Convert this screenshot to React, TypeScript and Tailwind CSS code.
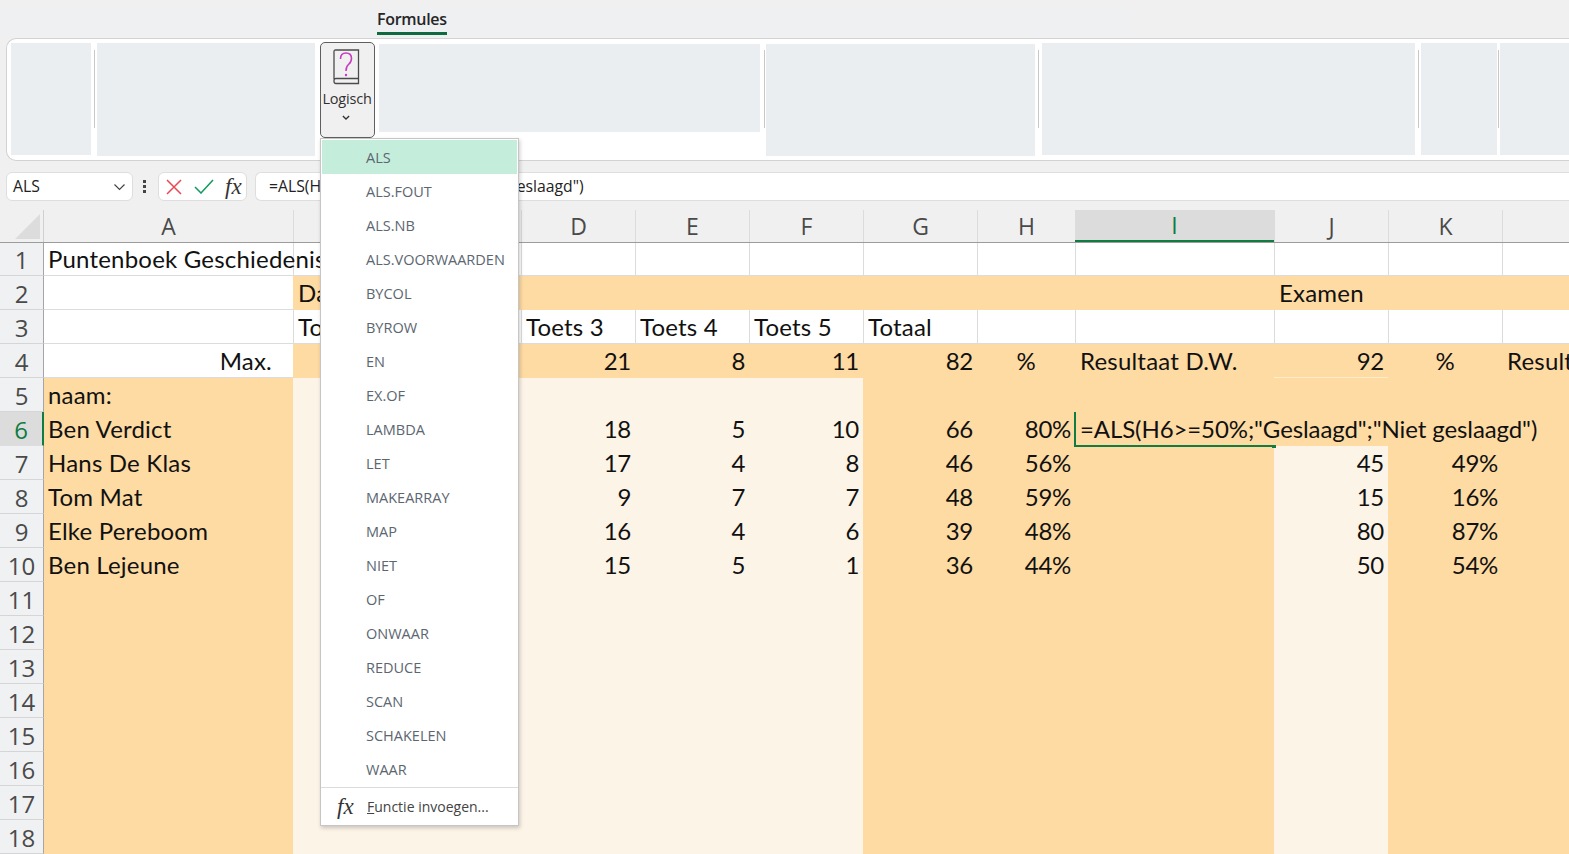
import React from 'react';

const MENU_ITEMS = [
  'ALS', 'ALS.FOUT', 'ALS.NB', 'ALS.VOORWAARDEN', 'BYCOL', 'BYROW', 'EN', 'EX.OF', 'LAMBDA', 'LET',
  'MAKEARRAY', 'MAP', 'NIET', 'OF', 'ONWAAR', 'REDUCE', 'SCAN', 'SCHAKELEN', 'WAAR',
];

const COLUMNS = [
  { label: 'A', width: 'w-[249px]' },
  { label: '', width: 'w-[114px]' },
  { label: '', width: 'w-[114px]' },
  { label: 'D', width: 'w-[114px]' },
  { label: 'E', width: 'w-[114px]' },
  { label: 'F', width: 'w-[114px]' },
  { label: 'G', width: 'w-[114px]' },
  { label: 'H', width: 'w-[98px]' },
  { label: 'I', width: 'w-[199px]' },
  { label: 'J', width: 'w-[114px]' },
  { label: 'K', width: 'w-[114px]' },
  { label: '', width: 'w-[67px]' },
];

type Row = Record<number, string>;

// index = column (0 is A)
const ROWS: Row[] = [
  { 0: 'Puntenboek Geschiedenis' },
  { 1: 'Dagelijks werk', 9: 'Examen' },
  { 1: 'Toets 1', 3: 'Toets 3', 4: 'Toets 4', 5: 'Toets 5', 6: 'Totaal' },
  { 0: 'Max.', 3: '21', 4: '8', 5: '11', 6: '82', 7: '%', 8: 'Resultaat D.W.', 9: '92', 10: '%', 11: 'Resultaat' },
  { 0: 'naam:' },
  { 0: 'Ben Verdict', 3: '18', 4: '5', 5: '10', 6: '66', 7: '80%', 8: '=ALS(H6>=50%;"Geslaagd";"Niet geslaagd")' },
  { 0: 'Hans De Klas', 3: '17', 4: '4', 5: '8', 6: '46', 7: '56%', 9: '45', 10: '49%' },
  { 0: 'Tom Mat', 3: '9', 4: '7', 5: '7', 6: '48', 7: '59%', 9: '15', 10: '16%' },
  { 0: 'Elke Pereboom', 3: '16', 4: '4', 5: '6', 6: '39', 7: '48%', 9: '80', 10: '87%' },
  { 0: 'Ben Lejeune', 3: '15', 4: '5', 5: '1', 6: '36', 7: '44%', 9: '50', 10: '54%' },
  {}, {}, {}, {}, {}, {}, {}, {},
];

const WHITE_A = 'bg-white border-b border-[#dcdcdc]';
const WHITE = 'bg-white border-l border-b border-[#dcdcdc]';
const ORANGE = 'bg-[#fedba3]';
const CREAM = 'bg-[#fdf4e8]';

function cellBg(row: number, col: number) {
  if (row === 1 || row === 3) return col === 0 ? WHITE_A : WHITE;
  if (row === 2 || row === 4) return col === 0 ? WHITE_A : ORANGE;
  if (col === 0) return ORANGE;
  if (col >= 1 && col <= 5) return CREAM;
  if (col === 9 && row >= 7) return CREAM;
  return ORANGE;
}

function cellAlign(row: number, col: number, text: string) {
  if (text === '%') return 'justify-center';
  if (row === 4 && col === 0) return 'justify-end pr-[21px] tracking-[0.2px]';
  if (/^\d+%?$/.test(text)) return 'justify-end pr-[4px] tracking-[-0.3px]';
  if (text.startsWith('=')) return 'justify-start pl-[5px] tracking-[-0.1px]';
  if (col === 0 || row === 3) return 'justify-start pl-[4px] tracking-[0.2px]';
  return 'justify-start pl-[5px] tracking-[0.2px]';
}

const FxLabel = ({ className }: { className: string }) => (
  <span className={`font-['Liberation_Serif',serif] italic ${className}`}>fx</span>
);

const Chevron = ({ className, weight = 1.2 }: { className: string; weight?: number }) => (
  <svg viewBox="0 0 12 8" className={className} fill="none" stroke="currentColor" strokeWidth={weight}>
    <path d="M1 1.5 L6 6.5 L11 1.5" />
  </svg>
);

const RibbonGroup = ({ className }: { className: string }) => <div className={`bg-[#ebeef0] shrink-0 ${className}`} />;
const RibbonSep = ({ className = '' }: { className?: string }) => (
  <div className={`w-px h-[78px] mt-[7px] shrink-0 bg-[#c8c8c8] ${className}`} />
);

const LogischButton = () => (
  <div className="w-[55px] h-[96px] -mt-px ml-[5px] mr-[4px] shrink-0 rounded-[5px] border border-[#5f5f5f] bg-[#f0f0f0] flex flex-col items-center pt-[6px]">
    <svg viewBox="0 0 28 36" className="w-[28px] h-[36px] -ml-[3px]" fill="none">
      <path d="M2 30 V2.5 Q2 1 3.5 1 H26.5 V34.5 H4 Q2 34.5 2 32.5 V31.5 Q2 29.5 4 29.5 H26.5" stroke="#4b4b4b" strokeWidth="1.3" />
      <path d="M8.5 10 Q8.5 4 14 4 Q19.5 4 19.5 9.5 Q19.5 13 16.5 15.5 Q14 17.5 14 22" stroke="#c83cc0" strokeWidth="1.6" />
      <circle cx="14" cy="26" r="1.2" fill="#c83cc0" />
    </svg>
    <span className="mt-[4px] -ml-[1px] text-[14.5px] leading-[20px] text-[#303030] tracking-[-0.2px]">Logisch</span>
    <Chevron className="w-[8px] h-[5px] mt-[6px] -ml-[3px] text-[#303030]" weight={2} />
  </div>
);

const LogicalMenu = () => (
  <div className="absolute left-[320px] top-[138px] w-[199px] h-[688px] z-20 bg-white border border-[#c6c6c6] shadow-[1px_2px_4px_rgba(0,0,0,0.2)]">
    <div className="pt-px px-px">
      {MENU_ITEMS.map((name, idx) => (
        <div
          key={name}
          className={`h-[34px] flex items-center pl-[44px] pt-[2px] text-[14.5px] text-[#5c6670] ${idx === 0 ? 'bg-[#c5eddc]' : ''}`}
        >
          {name}
        </div>
      ))}
    </div>
    {/* Functie invoegen */}
    <div className="mt-[1px] h-[38px] border-t border-[#dcdcdc] flex items-center pl-[16px]">
      <FxLabel className="w-[30px] text-[23px] leading-none text-[#333333]" />
      <span className="text-[14px] text-[#444444]"><span className="underline">F</span>unctie invoegen...</span>
    </div>
  </div>
);

export default function App() {
  return (
    <div className="relative w-[1569px] h-[854px] overflow-hidden bg-[#f0f0f0] font-['Open_Sans',sans-serif]">
      {/* Tabs */}
      <div className="h-[38px] pt-[9px]">
        <div className="w-[1130px] h-[28px] pl-[377px] bg-[#eef0f2] flex items-start">
          <span className="h-[26px] border-b-[3px] border-[#0f6b3f] text-[16px] leading-[20px] font-semibold tracking-[-0.3px] text-[#262626]">
            Formules
          </span>
        </div>
      </div>

      {/* Ribbon */}
      <div className="ml-[6px] h-[123px] rounded-l-[10px] border border-r-0 border-[#d2d2d2] bg-white pl-[4px] pt-[4px] flex items-start overflow-hidden">
        <RibbonGroup className="w-[80px] h-[112px]" />
        <RibbonSep className="ml-[3px] mr-[2px]" />
        <RibbonGroup className="w-[218px] h-[113px]" />
        <LogischButton />
        <RibbonGroup className="w-[381px] h-[88px] mt-px" />
        <RibbonSep className="ml-[4px] mr-[1px]" />
        <RibbonGroup className="w-[269px] h-[112px] mt-px" />
        <RibbonSep className="ml-[3px] mr-[3px]" />
        <RibbonGroup className="w-[373px] h-[112px]" />
        <RibbonSep className="ml-[3px] mr-[2px]" />
        <RibbonGroup className="w-[76px] h-[112px]" />
        <RibbonSep className="ml-[1px] mr-[1px]" />
        <RibbonGroup className="w-[80px] h-[112px]" />
      </div>

      {/* Formula bar */}
      <div className="h-[49px] pt-[11px] flex items-start text-[15.75px] text-[#222222]">
        <div className="ml-[6px] w-[127px] h-[29px] rounded-[6px] border border-[#dedede] bg-white flex items-center justify-between pl-[6px] pr-[6px]">
          <span>ALS</span>
          <Chevron className="w-[13px] h-[8px] text-[#444444]" />
        </div>
        <div className="ml-[10px] mt-[8px] w-[3px] flex flex-col gap-[2px]">
          <div className="h-[3px] bg-[#444444]" />
          <div className="h-[3px] bg-[#444444]" />
          <div className="h-[3px] bg-[#444444]" />
        </div>
        <div className="ml-[12px] w-[89px] h-[29px] rounded-[6px] border border-[#dedede] bg-white flex items-center pl-[7px]">
          <svg viewBox="0 0 16 16" className="w-[16px] h-[16px]" fill="none" stroke="#e8484f" strokeWidth="1.5">
            <path d="M1 1 L15 15 M15 1 L1 15" />
          </svg>
          <svg viewBox="0 0 20 15" className="ml-[12px] w-[20px] h-[15px]" fill="none" stroke="#0f9a5c" strokeWidth="1.5">
            <path d="M1 8 L7 14 L19 1" />
          </svg>
          <FxLabel className="ml-[11px] text-[23px] leading-none text-[#333333]" />
        </div>
        <div className="ml-[8px] flex-1 h-[29px] rounded-l-[6px] border border-r-0 border-[#dedede] bg-white flex items-center pl-[13px] whitespace-nowrap">
          =ALS(H6&gt;=50%;"Geslaagd";"Niet geslaagd")
        </div>
      </div>

      {/* Column headers */}
      <div className="flex h-[33px] border-b border-[#9c9c9c] bg-[#f0f0f0] text-[23px] text-[#4a4a4a]">
        <div className="w-[44px] shrink-0 border-r border-[#d0d0d0] flex items-end justify-end pb-[3px] pr-[3px]">
          <svg viewBox="0 0 24 24" className="w-[25px] h-[25px]">
            <path d="M24 0 V24 H0 Z" fill="#dcdcdc" />
          </svg>
        </div>
        {COLUMNS.map((col, idx) => (
          <div
            key={idx}
            className={`${col.width} shrink-0 flex items-center justify-center ${
              col.label === 'I'
                ? 'bg-[#dcdcdc] border-b-2 border-[#107c41] text-[#107c41]'
                : idx === 0
                  ? ''
                  : 'border-l border-[#dcdcdc]'
            }`}
          >
            {col.label}
          </div>
        ))}
      </div>

      {/* Sheet */}
      <div>
        {ROWS.map((row, rowIdx) => {
          const rowNo = rowIdx + 1;
          return (
            <div key={rowNo} className={`flex ${rowNo === 1 ? 'h-[33px]' : 'h-[34px]'}`}>
              <div
                className={`w-[44px] shrink-0 flex items-center justify-center pt-[2px] border-b border-r text-[24px] ${
                  rowNo === 6
                    ? 'bg-[#dcdcdc] border-b-[#dcdcdc] border-r-2 border-r-[#107c41] text-[#107c41]'
                    : 'bg-[#eff1f3] border-b-[#d5d5d5] border-r-[#a5a5a5] text-[#4a4a4a]'
                }`}
              >
                {rowNo}
              </div>
              {COLUMNS.map((col, colIdx) => {
                const text = row[colIdx];
                const editing = rowNo === 6 && colIdx === 8;
                const overflow = rowNo === 1 && colIdx === 0;
                return (
                  <div
                    key={colIdx}
                    className={`${col.width} shrink-0 relative flex items-center whitespace-nowrap font-['Lato',sans-serif] text-[24px] text-[#111111] ${cellBg(rowNo, colIdx)} ${
                      text ? cellAlign(rowNo, colIdx, text) : ''
                    } ${editing || overflow ? 'z-10' : ''} ${rowNo === 4 && colIdx === 9 ? 'border-b border-[#ffecc9]' : ''}`}
                  >
                    {text}
                    {editing && (
                      <>
                        <div className="absolute left-[-1px] top-0 bottom-0 w-[2px] bg-[#107c41]" />
                        <div className="absolute left-[-1px] right-[2px] bottom-[-1px] h-[2px] bg-[#107c41]" />
                        <div className="absolute right-[-2px] bottom-[-2px] w-[4px] h-[3px] bg-[#107c41]" />
                      </>
                    )}
                  </div>
                );
              })}
            </div>
          );
        })}
      </div>

      <LogicalMenu />
    </div>
  );
}
